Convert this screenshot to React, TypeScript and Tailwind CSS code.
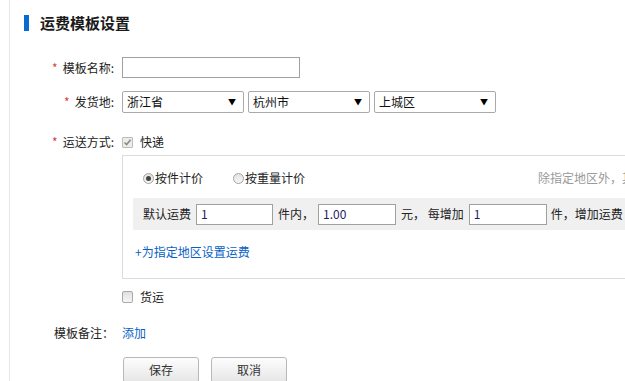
import React from 'react';

const font = { fontFamily: '"Noto Sans CJK SC", "Liberation Sans", sans-serif' };

function Label({ text, required }: { text: string; required?: boolean }) {
    return (
        <div className="w-[112px] shrink-0 text-right pr-[8px] text-[12px] text-[#222] whitespace-nowrap">
            {required && <span className="text-[#e4393c] mr-[5px]">*</span>}
            {text}
        </div>
    );
}

function Select({ value }: { value: string }) {
    return (
        <div className="w-[122px] h-[22px] border border-[#a9a9a9] rounded-[2px] bg-white flex items-center justify-between pl-[4px] pr-[7px] text-[12px] text-[#111]">
            <span>{value}</span>
            <span className="text-[8px] leading-none text-black">▼</span>
        </div>
    );
}

function Radio({ checked }: { checked?: boolean }) {
    return (
        <span className="shrink-0 w-[11px] h-[11px] rounded-full border border-[#a3a3a3] bg-gradient-to-b from-[#e2e2e2] to-[#f6f6f6] flex items-center justify-center mr-[1px]">
            {checked && <span className="w-[5px] h-[5px] rounded-full bg-[#444]" />}
        </span>
    );
}

function TextBox({ value, w }: { value?: string; w: string }) {
    return (
        <div className={`${w} h-[21px] border border-[#a0a0a0] bg-white flex items-center pl-[4px] text-[12px] text-[#2a1a5e]`}>
            {value}
        </div>
    );
}

export default function App() {
    return (
        <div className="w-[625px] h-[381px] overflow-hidden bg-white" style={font}>
            <div className="ml-[9px] h-full border-l border-[#e3e8ec] pl-[14px]">
                {/* title */}
                <div className="flex items-center pt-[15px]">
                    <span className="w-[5px] h-[16px] bg-[#0a6ad4]" />
                    <h1 className="ml-[11px] text-[15px] font-bold text-[#1a1a1a] leading-[16px]">运费模板设置</h1>
                </div>

                <div className="-ml-[14px]">
                    <div className="flex items-center mt-[26px] h-[21px]">
                        <Label text="模板名称:" required />
                        <TextBox w="w-[178px]" />
                    </div>

                    <div className="flex items-center mt-[13px] h-[22px]">
                        <Label text="发货地:" required />
                        <div className="flex gap-[4px]">
                            <Select value="浙江省" />
                            <Select value="杭州市" />
                            <Select value="上城区" />
                        </div>
                    </div>

                    <div className="flex items-center mt-[19px] h-[20px]">
                        <Label text="运送方式:" required />
                        <span className="w-[11px] h-[11px] border border-[#bdbdbd] bg-[#ececec] rounded-[1px] flex items-center justify-center">
                            <svg width="9" height="9" viewBox="0 0 9 9">
                                <path d="M1.5 4.5 L3.6 6.6 L7.6 1.8" stroke="#8a8a8a" strokeWidth="1.6" fill="none" />
                            </svg>
                        </span>
                        <span className="ml-[7px] text-[12px] text-[#222]">快递</span>
                    </div>

                    <div className="ml-[112px] mt-[3px] w-[760px] h-[124px] border border-[#dcdcdc] px-[10px] pt-[12px]">
                        <div className="flex items-center h-[20px] pl-[10px] text-[12px] text-[#222] whitespace-nowrap">
                            <Radio checked />
                            <span>按件计价</span>
                            <span className="ml-[30px] flex items-center">
                                <Radio />
                                <span>按重量计价</span>
                            </span>
                            <span className="ml-[233px] text-[#9a9a9a]">除指定地区外，其余地区的运费采用"默认运费"</span>
                        </div>

                        <div className="mt-[10px] h-[32px] bg-[#f0f0f0] flex items-center pl-[10px] text-[12px] text-[#222] whitespace-nowrap">
                            <span>默认运费</span>
                            <span className="ml-[5px]"><TextBox value="1" w="w-[77px]" /></span>
                            <span className="ml-[5px]">件内，</span>
                            <span className="ml-[4px]"><TextBox value="1.00" w="w-[78px]" /></span>
                            <span className="ml-[5px]">元，&nbsp;每增加</span>
                            <span className="ml-[5px]"><TextBox value="1" w="w-[78px]" /></span>
                            <span className="ml-[4px]">件，增加运费</span>
                        </div>

                        <div className="mt-[12px] h-[20px] flex items-center pl-[2px] text-[12px] text-[#0a5fc4]">
                            +为指定地区设置运费
                        </div>
                    </div>

                    <div className="flex items-center mt-[8px] h-[20px] ml-[112px]">
                        <span className="w-[11px] h-[12px] border border-[#a8a8a8] rounded-[2px] bg-gradient-to-b from-[#e0e0e0] to-[#f7f7f7]" />
                        <span className="ml-[7px] text-[12px] text-[#222]">货运</span>
                    </div>

                    <div className="flex items-center mt-[16px] h-[20px]">
                        <Label text="模板备注：" />
                        <span className="text-[12px] text-[#0a5fc4]">添加</span>
                    </div>

                    <div className="flex mt-[14px] ml-[113px] gap-[12px]">
                        <button className="w-[76px] h-[26px] border border-[#b8b8b8] rounded-[3px] bg-gradient-to-b from-[#fdfdfd] to-[#e6e6e6] text-[12px] text-[#333]">保存</button>
                        <button className="w-[76px] h-[26px] border border-[#b8b8b8] rounded-[3px] bg-gradient-to-b from-[#fdfdfd] to-[#e6e6e6] text-[12px] text-[#333]">取消</button>
                    </div>
                </div>
            </div>
        </div>
    );
}
